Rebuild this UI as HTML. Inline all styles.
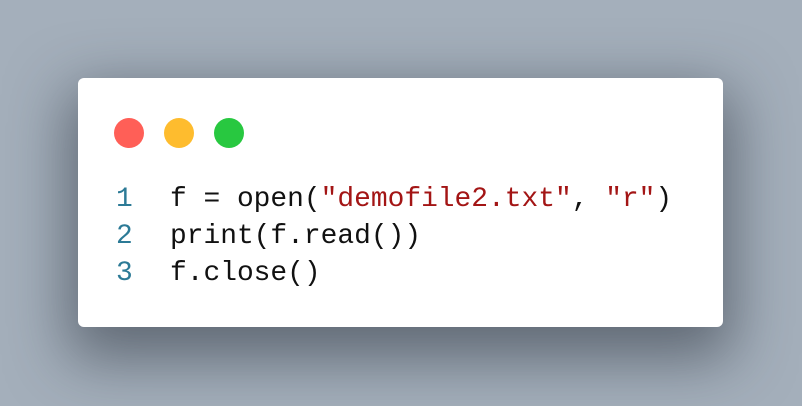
<!DOCTYPE html>
<html><head><style>
html,body{margin:0;padding:0;width:802px;height:406px;overflow:hidden;background:#a4afbb;}
.card{position:absolute;left:78px;top:78px;width:645px;height:249px;background:#fff;border-radius:6px;box-shadow:0 22px 60px 10px rgba(40,48,58,0.55);}
.dot{position:absolute;top:118px;width:30px;height:30px;border-radius:50%;}
.code{position:absolute;left:170px;top:181px;font-family:"Liberation Mono",monospace;font-size:27.9px;line-height:37px;color:#111;white-space:pre;}
.nums{position:absolute;left:116px;top:181px;font-family:"Liberation Mono",monospace;font-size:27.9px;line-height:37px;color:#2c7a96;white-space:pre;}
.s{color:#a31515;}
</style></head><body>
<div class="card"></div>
<div class="dot" style="left:114px;background:#ff5f57"></div>
<div class="dot" style="left:164px;background:#febc2e"></div>
<div class="dot" style="left:214px;background:#28c840"></div>
<div class="nums">1
2
3</div>
<div class="code">f = open(<span class="s">"demofile2.txt"</span>, <span class="s">"r"</span>)
print(f.read())
f.close()</div>
</body></html>
